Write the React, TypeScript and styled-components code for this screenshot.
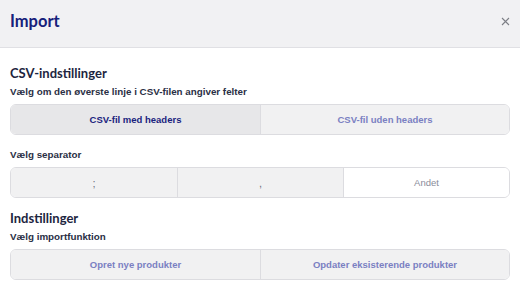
import React from "react"
import styled, { createGlobalStyle } from "styled-components"

const GlobalStyle = createGlobalStyle`
  html, body {
    margin: 0;
    padding: 0;
    background: #fff;
    font-family: "Liberation Sans", Arial, sans-serif;
  }
`

const Modal = styled.div`
  width: 520px;
  height: 289px;
  overflow: hidden;
  background: #fff;
`

const Header = styled.header`
  height: 48px;
  box-sizing: border-box;
  background: #f1f1f3;
  border-bottom: 1px solid #e0e0e4;
  display: flex;
  align-items: center;
  justify-content: space-between;
  padding: 0 9px 0 10px;
`

const Title = styled.h1`
  margin: 0 0 5px;
  font-family: Lato, "Noto Sans", sans-serif;
  font-weight: 700;
  font-size: 16.5px;
  color: #16207a;
`

const Close = styled.button`
  border: 0;
  background: none;
  padding: 0;
  margin-bottom: 5px;
  width: 12px;
  height: 12px;
  display: flex;
  align-items: center;
  justify-content: center;
  cursor: pointer;
`

const Body = styled.div`
  padding: 17px 10px 0;
`

const Section = styled.section`
  margin-bottom: 12px;
`

const Heading = styled.h2`
  margin: 0 0 5px;
  font-family: Lato, "Noto Sans", sans-serif;
  font-weight: 700;
  font-size: 13px;
  line-height: 16px;
  color: #1d2540;
`

const Label = styled.div<{ $gap?: number }>`
  font-size: 9.8px;
  font-weight: 700;
  color: #2a2f45;
  line-height: 12px;
  margin: ${(p) => p.$gap ?? 0}px 0 6px;
`

const Segmented = styled.div<{ $cols: number }>`
  display: grid;
  grid-template-columns: repeat(${(p) => p.$cols}, 1fr);
  height: 31px;
  border: 1px solid #dcdce0;
  border-radius: 6px;
  overflow: hidden;
  box-sizing: border-box;
`

const Segment = styled.button<{ $active?: boolean; $plain?: boolean }>`
  border: 0;
  border-left: 1px solid #dcdce0;
  &:first-child {
    border-left: 0;
  }
  background: ${(p) => (p.$active ? "#e7e7e9" : p.$plain ? "#ffffff" : "#f1f1f2")};
  color: ${(p) => (p.$active ? "#1a237e" : p.$plain ? "#8a8c9a" : "#7a80c2")};
  font-family: "Liberation Sans", Arial, sans-serif;
  font-size: 9.5px;
  font-weight: ${(p) => (p.$plain ? 400 : 700)};
  display: flex;
  align-items: center;
  justify-content: center;
  padding: 0;
  cursor: pointer;
`

const Sep = styled(Segment)`
  color: #6e7180;
  font-size: 11px;
  font-weight: 400;
`

export default function App() {
  return (
    <Modal>
      <GlobalStyle />
      <Header>
        <Title>Import</Title>
        <Close aria-label="Luk">
          <svg width="9" height="9" viewBox="0 0 9 9">
            <path d="M1 1L8 8M8 1L1 8" stroke="#7d7f86" strokeWidth="1.1" />
          </svg>
        </Close>
      </Header>
      <Body>
        <Section>
          <Heading>CSV-indstillinger</Heading>
          <Label>Vælg om den øverste linje i CSV-filen angiver felter</Label>
          <Segmented $cols={2}>
            <Segment $active>CSV-fil med headers</Segment>
            <Segment>CSV-fil uden headers</Segment>
          </Segmented>
          <Label $gap={14}>Vælg separator</Label>
          <Segmented $cols={3}>
            <Sep>;</Sep>
            <Sep>,</Sep>
            <Segment $plain>Andet</Segment>
          </Segmented>
        </Section>
        <Section>
          <Heading>Indstillinger</Heading>
          <Label>Vælg importfunktion</Label>
          <Segmented $cols={2}>
            <Segment>Opret nye produkter</Segment>
            <Segment>Opdater eksisterende produkter</Segment>
          </Segmented>
        </Section>
      </Body>
    </Modal>
  )
}
